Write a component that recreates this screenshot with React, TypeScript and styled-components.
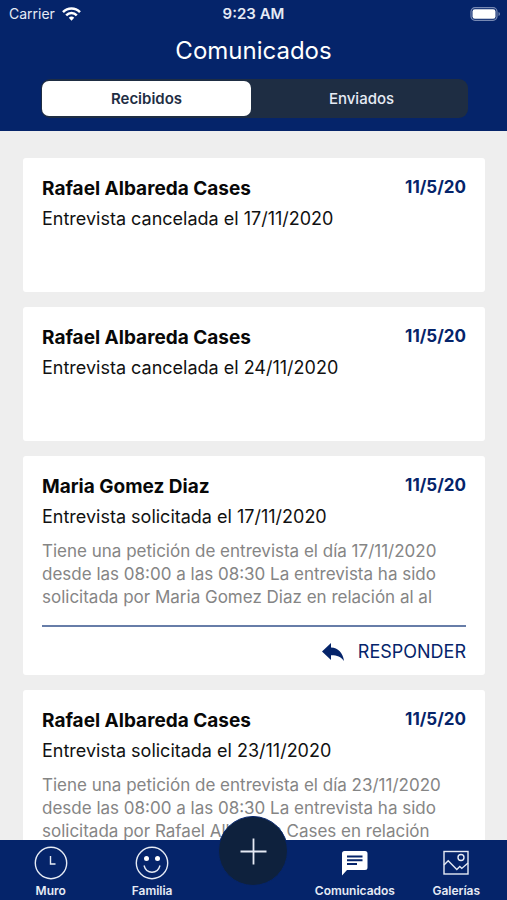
import React, { useState } from "react";
import styled, { createGlobalStyle } from "styled-components";

const navy = "#05246a";
const ink = "#1e2d43";

const GlobalStyle = createGlobalStyle`
  * { box-sizing: border-box; }
  body { margin: 0; background: #eeeeee; font-family: Inter, "Liberation Sans", sans-serif; }
  button { font: inherit; border: 0; padding: 0; background: none; cursor: pointer; }
  h1, h2, p { margin: 0; }
  svg { display: block; }
`;

const Screen = styled.div`
  height: 100vh;
  display: flex;
  flex-direction: column;
  overflow: hidden;
`;

const Header = styled.header`
  background: ${navy};
  color: #ffffff;
  padding-bottom: 13px;
  flex: none;
`;

const StatusBar = styled.div`
  display: grid;
  grid-template-columns: 1fr auto 1fr;
  align-items: center;
  height: 28px;
  padding: 0 6px;
  font-size: 14px;
  line-height: 20px;
  color: #e6ebf5;
`;

const Carrier = styled.span`
  display: flex;
  align-items: center;
  gap: 7px;
  padding-left: 3px;
`;

const Clock = styled.time`
  font-size: 15px;
  font-weight: 600;
`;

const BatterySlot = styled.span`
  justify-self: end;
`;

const Title = styled.h1`
  font-size: 24px;
  line-height: 32px;
  font-weight: 400;
  text-align: center;
  padding: 7px 0 12px;
`;

const Segments = styled.div`
  display: grid;
  grid-template-columns: 1fr 1fr;
  gap: 6px;
  height: 39px;
  margin: 0 39px 0 41px;
  padding: 2px 2px 2px 1px;
  border-radius: 9px;
  background: ${ink};
`;

const Segment = styled.button<{ $active: boolean }>`
  border-radius: 7px;
  font-size: 15px;
  font-weight: ${(p) => (p.$active ? 600 : 500)};
  color: ${(p) => (p.$active ? ink : "#e6ebf5")};
  && { background: ${(p) => (p.$active ? "#ffffff" : "transparent")}; }
`;

const List = styled.main`
  flex: 1;
  min-height: 0;
  overflow: hidden;
  display: flex;
  flex-direction: column;
  gap: 15px;
  padding: 27px 22px 0 23px;
  background: #eeeeee;
`;

const Card = styled.article`
  flex: none;
  min-height: 134px;
  padding: 19px 19px 10px;
  border-radius: 3px;
  background: #ffffff;
`;

const CardTop = styled.div`
  display: flex;
  justify-content: space-between;
  height: 28px;
`;

const Sender = styled.h2`
  font-size: 19px;
  line-height: 24px;
  font-weight: 700;
  color: #080808;
`;

const DateLabel = styled.time`
  font-size: 17px;
  line-height: 20px;
  font-weight: 700;
  color: ${navy};
`;

const Subject = styled.p`
  font-size: 18px;
  line-height: 28px;
  color: #111111;
`;

const Message = styled.p`
  margin-top: 9px;
  font-size: 17px;
  line-height: 23px;
  color: #858585;
  display: -webkit-box;
  -webkit-box-orient: vertical;
  -webkit-line-clamp: 3;
  overflow: hidden;
`;

const CardFooter = styled.div`
  display: flex;
  justify-content: flex-end;
  margin-top: 16px;
  padding-top: 12px;
  border-top: 2px solid #677da8;
`;

const Reply = styled.button`
  display: flex;
  align-items: center;
  gap: 14px;
  font-size: 18px;
  line-height: 26px;
  color: ${navy};
`;

const TabBar = styled.nav`
  flex: none;
  display: grid;
  grid-template-columns: repeat(5, 1fr);
  height: 60px;
  background: ${navy};
  position: relative;
`;

const Tab = styled.button`
  display: flex;
  flex-direction: column;
  align-items: center;
  gap: 2px;
  padding-top: 5px;
  color: #e6ebf5;
  font-size: 12px;
  line-height: 16px;
  font-weight: 600;
`;

const AddSlot = styled.div`
  display: flex;
  justify-content: center;
`;

const AddButton = styled.button`
  width: 70px;
  height: 70px;
  margin-top: -24px;
  display: grid;
  place-items: center;
  border-radius: 50%;
  color: #e6ebf5;
  && { background: #0e213d; border: 1px solid ${navy}; }
`;

const WifiIcon = () => (
  <svg width="19" height="14" viewBox="0 0 19 14" fill="none" stroke="#fff" strokeWidth="2.5" aria-hidden="true">
    <path d="M1 5.1C5.8.2 13.2.2 18 5.1" />
    <path d="M4.2 8.4c3-3.1 7.600-3.100 10.600 0" />
    <path d="M6.800 10.700c1.500-1.500 3.900-1.500 5.400 0L9.500 13.700z" fill="#fff" stroke="none" />
  </svg>
);

const BatteryIcon = () => (
  <svg width="31" height="14" viewBox="0 0 31 14" aria-hidden="true">
    <rect x="1" y=".7" width="26" height="12.6" rx="4" fill="none" stroke="#7789b3" strokeWidth="1.2" />
    <rect x="2.5" y="2.3" width="23" height="9.4" rx="2.3" fill="#fff" />
    <path d="M28.5 5v4c2-.8 2-3.200 0-4z" fill="#7789b3" />
  </svg>
);

const ReplyIcon = () => (
  <svg width="22" height="18" viewBox="0 0 22 18" fill={navy} aria-hidden="true">
    <path d="M0 8.500 9 0v4.600c7 .3 12 5.200 13 13.400-3.300-4.300-7-5.800-13-5.700V17z" />
  </svg>
);

const ClockIcon = () => (
  <svg width="34" height="36" viewBox="0 0 34 36" fill="none" stroke="currentColor" strokeWidth="1.400" aria-hidden="true">
    <circle cx="17" cy="18" r="15.700" />
    <path d="M16.500 11v8h5" />
  </svg>
);

const SmileIcon = () => (
  <svg width="34" height="36" viewBox="0 0 34 36" fill="none" stroke="currentColor" strokeWidth="1.400" aria-hidden="true">
    <circle cx="17" cy="18" r="15.700" />
    <circle cx="11.500" cy="13.500" r="2.500" fill="#fff" stroke="none" />
    <circle cx="22.500" cy="13.500" r="2.500" fill="#fff" stroke="none" />
    <path d="M9 20.500c2.500 9 13.500 9 16 0" />
  </svg>
);

const ChatIcon = () => (
  <svg width="34" height="36" viewBox="0 0 34 36" aria-hidden="true">
    <path d="M6.500 6h20.500a2.500 2.500 0 0 1 2.500 2.500v14a2.500 2.500 0 0 1-2.500 2.500H9l-5 5.500V8.500A2.500 2.500 0 0 1 6.500 6z" fill="#fff" />
    <path d="M9 11.500h15.500M9 15.300h15.500M9 19.100h10" stroke={navy} strokeWidth="2" />
  </svg>
);

const GalleryIcon = () => (
  <svg width="34" height="36" viewBox="0 0 34 36" fill="none" stroke="currentColor" strokeWidth="1.400" aria-hidden="true">
    <rect x="5" y="6.500" width="24" height="22.500" />
    <circle cx="22" cy="12.500" r="3" />
    <path d="M5 20l4.200-4.200 8.600 8.600 3-3 2 2 6.200-5.500" />
  </svg>
);

const PlusIcon = () => (
  <svg width="28" height="28" viewBox="0 0 28 28" stroke="currentColor" strokeWidth="1.800" aria-hidden="true">
    <path d="M14.500 1.500v26M1.500 14.500h26" />
  </svg>
);

type Notice = { sender: string; date: string; subject: string; message?: string; reply?: boolean };

const notices: Notice[] = [
  { sender: "Rafael Albareda Cases", date: "11/5/20", subject: "Entrevista cancelada el 17/11/2020" },
  { sender: "Rafael Albareda Cases", date: "11/5/20", subject: "Entrevista cancelada el 24/11/2020" },
  {
    sender: "Maria Gomez Diaz",
    date: "11/5/20",
    subject: "Entrevista solicitada el 17/11/2020",
    message:
      "Tiene una petición de entrevista el día 17/11/2020 desde las 08:00 a las 08:30 La entrevista ha sido solicitada por Maria Gomez Diaz en relación al al",
    reply: true,
  },
  {
    sender: "Rafael Albareda Cases",
    date: "11/5/20",
    subject: "Entrevista solicitada el 23/11/2020",
    message:
      "Tiene una petición de entrevista el día 23/11/2020 desde las 08:00 a las 08:30 La entrevista ha sido solicitada por Rafael Albareda Cases en relación",
  },
];

const NoticeCard = ({ notice }: { notice: Notice }) => (
  <Card>
    <CardTop>
      <Sender>{notice.sender}</Sender>
      <DateLabel>{notice.date}</DateLabel>
    </CardTop>
    <Subject>{notice.subject}</Subject>
    {notice.message && <Message>{notice.message}</Message>}
    {notice.reply && (
      <CardFooter>
        <Reply type="button">
          <ReplyIcon />
          RESPONDER
        </Reply>
      </CardFooter>
    )}
  </Card>
);

export default function App() {
  const [box, setBox] = useState("Recibidos");
  return (
    <Screen>
      <GlobalStyle />
      <Header>
        <StatusBar>
          <Carrier>
            Carrier
            <WifiIcon />
          </Carrier>
          <Clock>9:23 AM</Clock>
          <BatterySlot>
            <BatteryIcon />
          </BatterySlot>
        </StatusBar>
        <Title>Comunicados</Title>
        <Segments>
          {["Recibidos", "Enviados"].map((name) => (
            <Segment key={name} type="button" $active={box === name} aria-pressed={box === name} onClick={() => setBox(name)}>
              {name}
            </Segment>
          ))}
        </Segments>
      </Header>
      <List>
        {notices.map((notice, i) => (
          <NoticeCard key={i} notice={notice} />
        ))}
      </List>
      <TabBar>
        <Tab type="button"><ClockIcon />Muro</Tab>
        <Tab type="button"><SmileIcon />Familia</Tab>
        <AddSlot>
          <AddButton type="button" aria-label="Nuevo comunicado"><PlusIcon /></AddButton>
        </AddSlot>
        <Tab type="button" aria-current="page"><ChatIcon />Comunicados</Tab>
        <Tab type="button"><GalleryIcon />Galerías</Tab>
      </TabBar>
    </Screen>
  );
}
